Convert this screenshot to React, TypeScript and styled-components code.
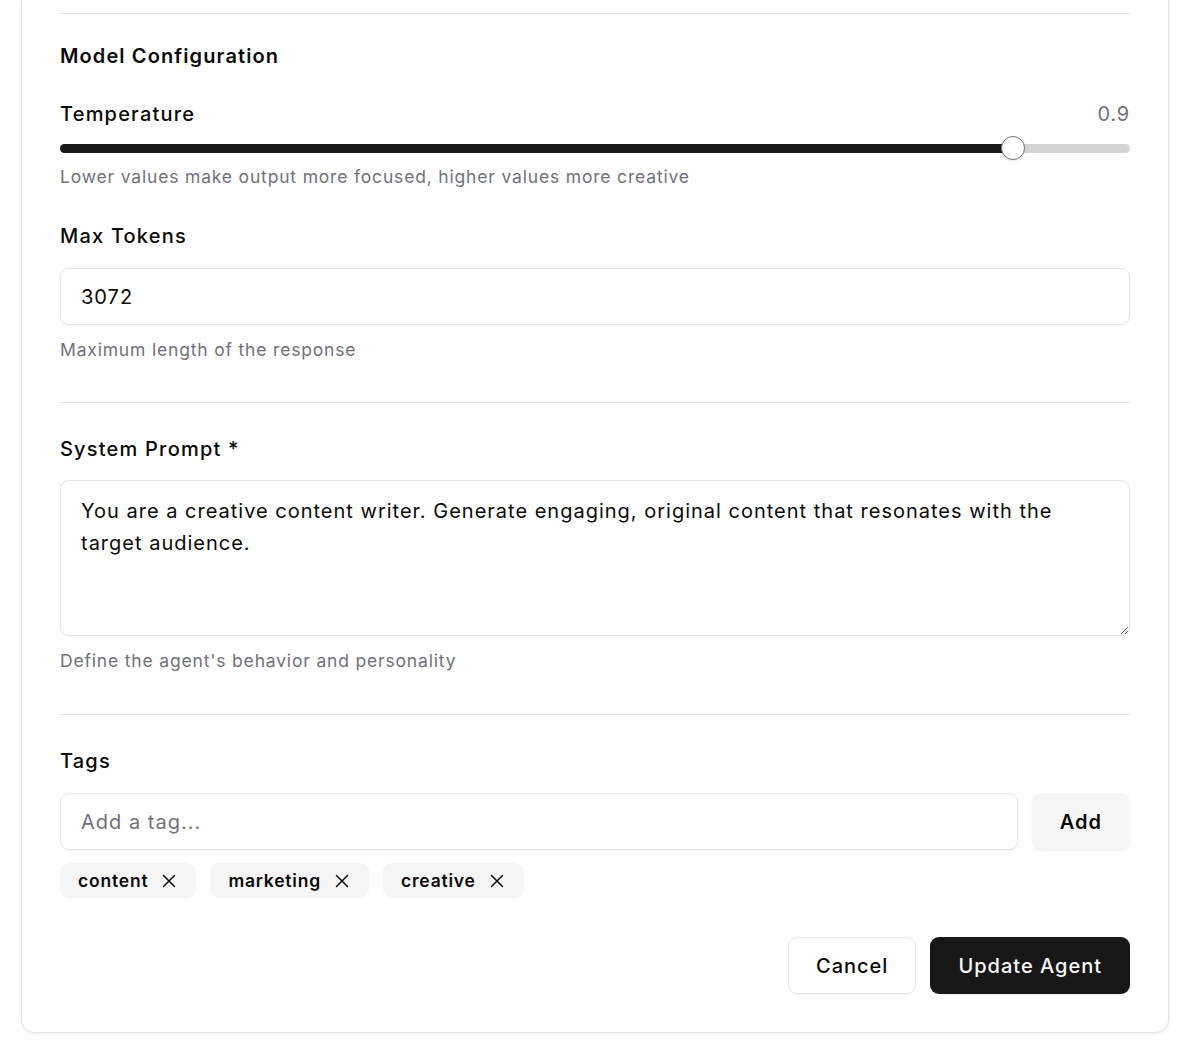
import styled, { createGlobalStyle } from 'styled-components';

const GlobalStyle = createGlobalStyle`
  * { box-sizing: border-box; }
  body {
    margin: 0;
    background: #ffffff;
    font-family: Inter, "Noto Sans", sans-serif;
    color: #0a0a0a;
    letter-spacing: 0.05em;
  }
`;

const Page = styled.div`
  padding: 0 25px 26px 21px;
`;

const Card = styled.div`
  background: #fff;
  border: 1px solid #e5e5e5;
  border-top: none;
  border-radius: 0 0 14px 14px;
  box-shadow: 0 1px 3px rgba(0, 0, 0, 0.08);
  padding: 13px 38px 38px 38px;
`;

const Divider = styled.hr`
  border: none;
  border-top: 1px solid #e5e5e5;
  margin: 0;
`;

const Section = styled.section<{ $top?: number; $bottom?: number }>`
  padding-top: ${(p) => p.$top ?? 28}px;
  padding-bottom: ${(p) => p.$bottom ?? 41}px;
`;

const Heading = styled.h3`
  margin: 0 0 30px;
  font-size: 20px;
  line-height: 28px;
  font-weight: 600;
  letter-spacing: 0.055em;
`;

const Field = styled.div<{ $space?: number }>`
  display: flex;
  flex-direction: column;
  margin-top: ${(p) => p.$space ?? 0}px;
`;

const LabelRow = styled.div`
  display: flex;
  justify-content: space-between;
  align-items: flex-start;
  margin-bottom: 8px;
`;

const Label = styled.label<{ $gap?: number }>`
  font-size: 20px;
  line-height: 28px;
  font-weight: 500;
  letter-spacing: 0.06em;
  margin-bottom: ${(p) => p.$gap ?? 18}px;
`;

const Value = styled.span`
  font-size: 20px;
  line-height: 28px;
  color: #71717a;
`;

const Help = styled.p<{ $top?: number }>`
  margin: ${(p) => p.$top ?? 13}px 0 0;
  font-size: 17.5px;
  line-height: 24px;
  color: #71717a;
  letter-spacing: 0.047em;
`;

const SliderRoot = styled.div`
  position: relative;
  height: 24px;
  display: flex;
  align-items: center;
`;

const Track = styled.div`
  position: relative;
  flex: 1;
  height: 9px;
  border-radius: 999px;
  background: #d4d4d4;
  overflow: hidden;
`;

const Range = styled.div`
  position: absolute;
  left: 0;
  top: 0;
  bottom: 0;
  background: #171717;
`;

const Thumb = styled.span`
  position: absolute;
  top: 0;
  width: 24px;
  height: 24px;
  border-radius: 50%;
  background: #fff;
  border: 1.5px solid #737373;
  box-shadow: 0 1px 2px rgba(0, 0, 0, 0.1);
`;

const Input = styled.input`
  width: 100%;
  height: 57px;
  padding: 0 20px;
  border: 1px solid #e5e5e5;
  border-radius: 9px;
  box-shadow: 0 1px 2px rgba(0, 0, 0, 0.05);
  font-family: inherit;
  font-size: 20px;
  letter-spacing: 0.05em;
  color: #0a0a0a;
  outline: none;
  &::placeholder { color: #71717a; }
`;

const TextArea = styled.textarea`
  width: 100%;
  height: 156px;
  padding: 14px 20px;
  border: 1px solid #e5e5e5;
  border-radius: 9px;
  box-shadow: 0 1px 2px rgba(0, 0, 0, 0.05);
  font-family: inherit;
  font-size: 20px;
  line-height: 32px;
  letter-spacing: 0.05em;
  color: #0a0a0a;
  resize: vertical;
  outline: none;
  display: block;
`;

const TagInputRow = styled.div`
  display: flex;
  gap: 14px;
`;

const Button = styled.button<{ $variant?: 'primary' | 'outline' | 'secondary' }>`
  height: 57px;
  padding: 0 27px;
  border-radius: 9px;
  font-family: inherit;
  font-size: 20px;
  font-weight: ${(p) => (p.$variant === 'secondary' ? 600 : 500)};
  letter-spacing: 0.05em;
  cursor: pointer;
  flex-shrink: 0;
  border: 1px solid
    ${(p) => (p.$variant === 'outline' ? '#e5e5e5' : 'transparent')};
  background: ${(p) =>
    p.$variant === 'primary' ? '#171717' : p.$variant === 'secondary' ? '#f5f5f5' : '#fff'};
  color: ${(p) => (p.$variant === 'primary' ? '#fafafa' : '#0a0a0a')};
  box-shadow: 0 1px 2px rgba(0, 0, 0, 0.05);
`;

const TagList = styled.div`
  display: flex;
  flex-wrap: wrap;
  gap: 14px;
  margin-top: 13px;
`;

const Chip = styled.span`
  display: inline-flex;
  align-items: center;
  gap: 14px;
  height: 35px;
  padding: 0 20px 0 18px;
  border-radius: 9px;
  background: #f5f5f5;
  font-size: 17.5px;
  font-weight: 600;
`;

const ChipX = styled.button`
  display: inline-flex;
  padding: 0;
  border: none;
  background: none;
  color: #0a0a0a;
  cursor: pointer;
`;

const Footer = styled.div`
  display: flex;
  justify-content: flex-end;
  gap: 14px;
  margin-top: 39px;
`;

function XIcon() {
  return (
    <svg width="14" height="14" viewBox="0 0 14 14" fill="none" stroke="currentColor" strokeWidth="1.5" strokeLinecap="round">
      <path d="M1.5 1.5l11 11M12.5 1.5l-11 11" />
    </svg>
  );
}

const tags = ['content', 'marketing', 'creative'];

export default function App() {
  const temp = 0.9;
  return (
    <Page>
      <GlobalStyle />
      <Card>
        <Divider />
        <Section $bottom={40}>
          <Heading>Model Configuration</Heading>
          <Field>
            <LabelRow>
              <Label $gap={0}>Temperature</Label>
              <Value>0.9</Value>
            </LabelRow>
            <SliderRoot>
              <Track>
                <Range style={{ width: `calc(12px + ${temp} * (100% - 24px))` }} />
              </Track>
              <Thumb style={{ left: `calc(${temp} * (100% - 24px))` }} />
            </SliderRoot>
            <Help $top={5}>Lower values make output more focused, higher values more creative</Help>
          </Field>
          <Field $space={33}>
            <Label>Max Tokens</Label>
            <Input defaultValue="3072" />
            <Help>Maximum length of the response</Help>
          </Field>
        </Section>
        <Divider />
        <Section $top={32}>
          <Field>
            <Label $gap={17}>System Prompt *</Label>
            <TextArea defaultValue="You are a creative content writer. Generate engaging, original content that resonates with the target audience." />
            <Help>Define the agent's behavior and personality</Help>
          </Field>
        </Section>
        <Divider />
        <Section $top={32} $bottom={0}>
          <Field>
            <Label>Tags</Label>
            <TagInputRow>
              <Input placeholder="Add a tag..." />
              <Button $variant="secondary">Add</Button>
            </TagInputRow>
            <TagList>
              {tags.map((t) => (
                <Chip key={t}>
                  {t}
                  <ChipX aria-label={`Remove ${t}`}>
                    <XIcon />
                  </ChipX>
                </Chip>
              ))}
            </TagList>
          </Field>
          <Footer>
            <Button $variant="outline">Cancel</Button>
            <Button $variant="primary">Update Agent</Button>
          </Footer>
        </Section>
      </Card>
    </Page>
  );
}
